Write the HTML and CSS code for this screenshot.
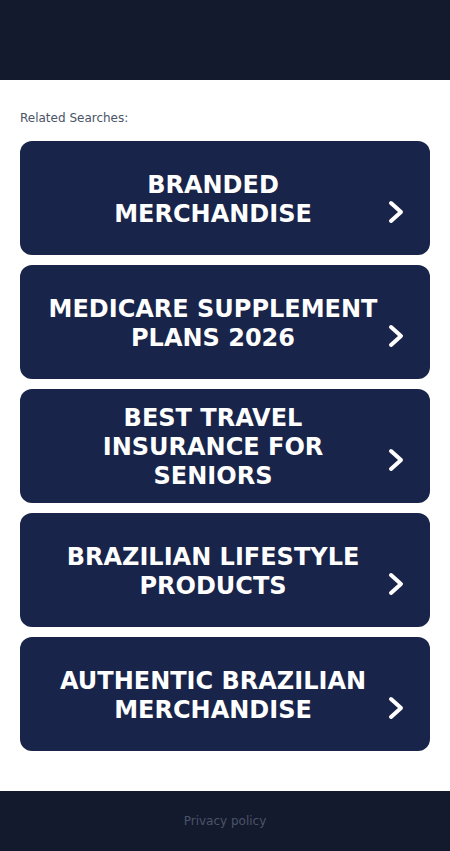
FILE: index.html
```html
<!DOCTYPE html>
<html lang="en">
<head>
    <meta charset="UTF-8">
    <meta name="viewport" content="width=device-width, initial-scale=1.0">
    <title>Related Searches</title>
    <link rel="stylesheet" href="styles.css">
</head>
<body>
    <header class="top-bar"></header>
    <main class="container">
        <p class="related-title">Related Searches:</p>
        <div class="search-list">
            <a class="search-item" href="#">
                <span class="search-text">Branded Merchandise</span>
                <svg class="chevron" viewBox="0 0 20 28"><path d="M5 5l10 9-10 9"/></svg>
            </a>
            <a class="search-item" href="#">
                <span class="search-text">Medicare Supplement Plans 2026</span>
                <svg class="chevron" viewBox="0 0 20 28"><path d="M5 5l10 9-10 9"/></svg>
            </a>
            <a class="search-item" href="#">
                <span class="search-text">Best Travel Insurance for Seniors</span>
                <svg class="chevron" viewBox="0 0 20 28"><path d="M5 5l10 9-10 9"/></svg>
            </a>
            <a class="search-item" href="#">
                <span class="search-text">Brazilian Lifestyle Products</span>
                <svg class="chevron" viewBox="0 0 20 28"><path d="M5 5l10 9-10 9"/></svg>
            </a>
            <a class="search-item" href="#">
                <span class="search-text">Authentic Brazilian Merchandise</span>
                <svg class="chevron" viewBox="0 0 20 28"><path d="M5 5l10 9-10 9"/></svg>
            </a>
        </div>
    </main>
    <footer class="bottom-bar">
        <a href="#">Privacy policy</a>
    </footer>
</body>
</html>
```

FILE: styles.css
```css
body {
    font-family: "DejaVu Sans", sans-serif;
    margin: 0;
    padding: 0;
    background-color: #fff;
}

.top-bar {
    height: 80px;
    background-color: #141a2e;
}

.container {
    padding: 30px 20px 40px;
}

.related-title {
    margin: 0 0 15px;
    font-size: 12px;
    line-height: 16px;
    color: #4b5368;
}

.search-list {
    display: flex;
    flex-direction: column;
    gap: 10px;
}

.search-item {
    display: flex;
    align-items: center;
    height: 114px;
    padding: 0 24px 0 20px;
    box-sizing: border-box;
    background-color: #18244a;
    border-radius: 12px;
    color: #fff;
    text-decoration: none;
}

.search-text {
    flex: 1;
    padding: 3px 7px 0;
    text-align: center;
    text-transform: uppercase;
    font-weight: bold;
    font-size: 24px;
    line-height: 29px;
}

.chevron {
    width: 20px;
    height: 28px;
    flex-shrink: 0;
    margin-top: 28px;
    fill: none;
    stroke: #fff;
    stroke-width: 4;
    stroke-linecap: round;
    stroke-linejoin: round;
}

.bottom-bar {
    height: 60px;
    background-color: #141a2e;
    display: flex;
    align-items: center;
    justify-content: center;
}

.bottom-bar a {
    font-size: 12px;
    color: #4b5368;
    text-decoration: none;
}
```
